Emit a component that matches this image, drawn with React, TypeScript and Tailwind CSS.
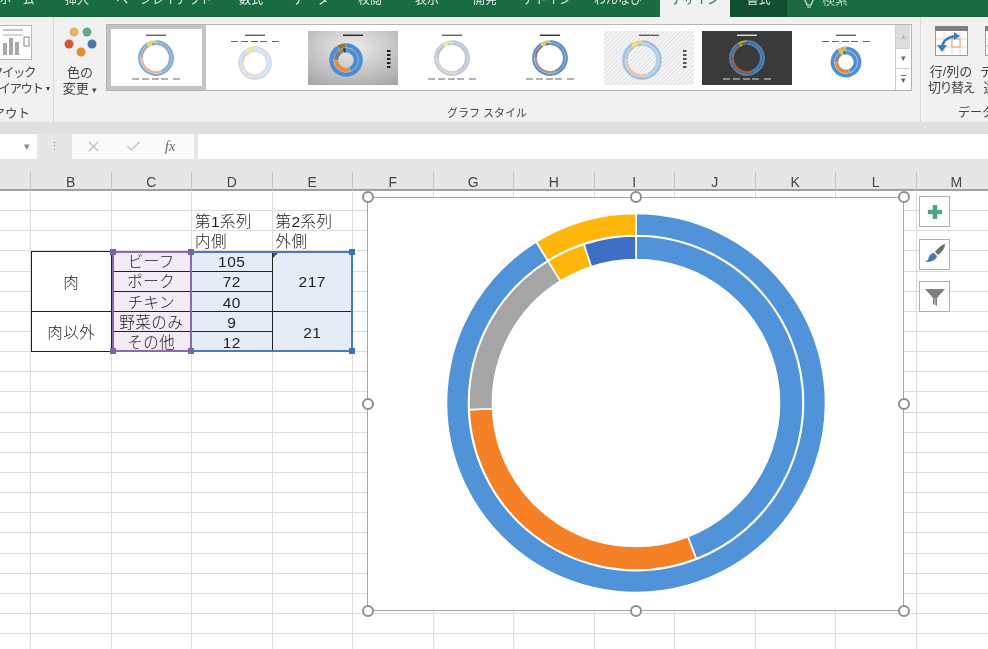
import { Check, X } from "lucide-react";

const FONT = "font-['Liberation_Sans','Noto_Sans_CJK_JP',sans-serif]";

const TABS = [
  { label: "ホーム", w: "w-[34px]" },
  { label: "挿入", w: "w-[86px]" },
  { label: "ページレイアウト", w: "w-[88px]" },
  { label: "数式", w: "w-[86px]" },
  { label: "データ", w: "w-[34px]" },
  { label: "校閲", w: "w-[84px]" },
  { label: "表示", w: "w-[30px]" },
  { label: "開発", w: "w-[86px]" },
  { label: "アドイン", w: "w-[38px]" },
  { label: "わんなび", w: "w-[94px] pl-[10px]" },
];

const COLS = ["", "B", "C", "D", "E", "F", "G", "H", "I", "J", "K", "L", "M"];

// text and look of the cells that hold data (row-column, 0 based)
const LINE = "border-b-[#222]";
const BOX = "border-l border-l-[#222] border-r-[#222]";
const CELLS: Record<string, { text: string; cls: string }> = {
  "1-3": { text: "第1系列", cls: "justify-start pl-[3px]" },
  "1-4": { text: "第2系列", cls: "justify-start pl-[3px]" },
  "2-3": { text: "内側", cls: "justify-start pl-[3px]" },
  "2-4": { text: "外側", cls: "justify-start pl-[3px]" },
  "3-1": { text: "肉", cls: `row-span-3 border-t border-t-[#222] ${BOX} ${LINE}` },
  "6-1": { text: "肉以外", cls: `row-span-2 ${BOX} ${LINE}` },
  "3-2": { text: "ビーフ", cls: `bg-[#f2ebf5] ${LINE}` },
  "4-2": { text: "ポーク", cls: `bg-[#f2ebf5] ${LINE}` },
  "5-2": { text: "チキン", cls: `bg-[#f2ebf5] ${LINE}` },
  "6-2": { text: "野菜のみ", cls: `bg-[#f2ebf5] ${LINE}` },
  "7-2": { text: "その他", cls: `bg-[#f2ebf5] ${LINE}` },
  "3-3": { text: "105", cls: `bg-[#e6ecf6] border-r-[#222] ${LINE}` },
  "4-3": { text: "72", cls: `bg-[#e6ecf6] border-r-[#222] ${LINE}` },
  "5-3": { text: "40", cls: `bg-[#e6ecf6] border-r-[#222] ${LINE}` },
  "6-3": { text: "9", cls: `bg-[#e6ecf6] border-r-[#222] ${LINE}` },
  "7-3": { text: "12", cls: `bg-[#e6ecf6] border-r-[#222] ${LINE}` },
  "3-4": { text: "217", cls: `row-span-3 bg-[#e6ecf6] ${LINE}` },
  "6-4": { text: "21", cls: `row-span-2 bg-[#e6ecf6] ${LINE}` },
};
const MERGED = new Set(["4-1", "5-1", "7-1", "4-4", "5-4", "7-4"]);

function polar(r: number, deg: number) {
  const a = ((deg - 90) * Math.PI) / 180;
  return [r * Math.cos(a), r * Math.sin(a)];
}

function slice(r0: number, r1: number, a0: number, a1: number) {
  const large = a1 - a0 > 180 ? 1 : 0;
  const [x0, y0] = polar(r1, a0);
  const [x1, y1] = polar(r1, a1);
  const [x2, y2] = polar(r0, a1);
  const [x3, y3] = polar(r0, a0);
  return `M${x0} ${y0}A${r1} ${r1} 0 ${large} 1 ${x1} ${y1}L${x2} ${y2}A${r0} ${r0} 0 ${large} 0 ${x3} ${y3}Z`;
}

function Ring({
  values,
  colors,
  r0,
  r1,
  gap = 1.6,
  gapColor = "#fff",
}: {
  values: number[];
  colors: string[];
  r0: number;
  r1: number;
  gap?: number;
  gapColor?: string;
}) {
  const total = values.reduce((a, b) => a + b, 0);
  let at = 0;
  return (
    <>
      {values.map((v, i) => {
        const from = at;
        at += (v / total) * 360;
        return <path key={i} d={slice(r0, r1, from, at)} fill={colors[i]} stroke={gapColor} strokeWidth={gap} />;
      })}
    </>
  );
}

function Donut() {
  return (
    <svg width="400" height="400" viewBox="-200 -200 400 400" className="-mt-[2px]">
      <Ring values={[217, 21]} colors={["#5193d8", "#ffb60b"]} r0={167.5} r1={189.5} />
      <Ring
        values={[105, 72, 40, 9, 12]}
        colors={["#5193d8", "#f58025", "#a5a5a5", "#ffb60b", "#3f6fc4"]}
        r0={143.5}
        r1={167}
      />
    </svg>
  );
}

type ThumbProps = {
  id: string;
  bg?: string;
  r?: number;
  w?: number;
  cx?: number;
  cy?: number;
  title?: string;
  outer?: string[];
  inner?: string[];
  legend?: "bottom" | "top" | "right";
  legendColor?: string;
};

// tiny preview of a chart style; the text in them is only dashes at this size
function Thumb({
  id,
  bg = "#fff",
  r = 18,
  w = 5,
  cx = 45,
  cy = 27,
  title = "#555",
  outer = ["#7aaad8", "#ecd050"],
  inner = ["#8fa8c4", "#e8b090", "#a8a8a8", "#ecd050", "#7b9bd0"],
  legend = "bottom",
  legendColor = "#666",
}: ThumbProps) {
  const lx = [21, 31, 41, 50, 62];
  const ly = legend === "top" ? 10 : 47.5;
  const fill = bg === "stripes" || bg === "grad" ? `url(#${id})` : bg;
  const gapColor = bg === "#3a3a3a" ? "#3a3a3a" : "#fff";
  return (
    <svg width="90" height="54" viewBox="0 0 90 54">
      <defs>
        {bg === "stripes" && (
          <pattern id={id} width="3" height="3" patternUnits="userSpaceOnUse" patternTransform="rotate(45)">
            <rect width="3" height="3" fill="#f6f6f6" />
            <rect width="1" height="3" fill="#dedede" />
          </pattern>
        )}
        {bg === "grad" && (
          <radialGradient id={id} cx="50%" cy="30%" r="80%">
            <stop offset="0%" stopColor="#ececec" />
            <stop offset="100%" stopColor="#a8a8a8" />
          </radialGradient>
        )}
      </defs>
      <rect width="90" height="54" fill={fill} />
      <rect x="35" y="3.6" width="20" height="1.3" fill={title} />
      {legend === "right"
        ? [19, 23, 27, 31, 35].map((y) => <rect key={y} x="79" y={y} width="3.5" height="2" fill={legendColor} />)
        : lx.map((x) => <rect key={x} x={x} y={ly} width="7" height="1" fill={legendColor} />)}
      <g transform={`translate(${cx} ${cy})`}>
        <Ring values={[217, 21]} colors={outer} r0={r - w / 2} r1={r} gap={0.2} gapColor={gapColor} />
        <Ring values={[105, 72, 40, 9, 12]} colors={inner} r0={r - w} r1={r - w / 2} gap={0.2} gapColor={gapColor} />
      </g>
    </svg>
  );
}

function QuickLayoutIcon() {
  return (
    <svg width="33" height="35" viewBox="0 0 33 35" className="-ml-[1px]">
      <rect x="0.5" y="0.5" width="32" height="34" fill="#fff" stroke="#b8b8b8" />
      <rect x="4" y="4" width="20" height="2" fill="#c4c4c4" />
      <rect x="4" y="9" width="20" height="2" fill="#d4d4d4" />
      <rect x="4" y="18" width="4" height="12" fill="#a8a8a8" />
      <rect x="10" y="13" width="4" height="17" fill="#a8a8a8" />
      <rect x="16" y="17" width="4" height="13" fill="#a8a8a8" />
      <rect x="25" y="12" width="5" height="9" fill="#fff" stroke="#888" />
    </svg>
  );
}

function ColorDots() {
  return (
    <svg width="36" height="32" viewBox="0 0 36 32">
      <circle cx="12" cy="6" r="4.5" fill="#e4b464" />
      <circle cx="25" cy="6" r="4.5" fill="#68a68e" />
      <circle cx="7" cy="18" r="4.5" fill="#d2573a" />
      <circle cx="30" cy="18" r="4.5" fill="#4a78ad" />
      <circle cx="19" cy="26" r="4.5" fill="#e58a35" />
    </svg>
  );
}

function SwitchIcon({ className = "" }: { className?: string }) {
  return (
    <svg width="33" height="30" viewBox="0 0 33 30" className={className}>
      <rect x="0.5" y="0.5" width="32" height="29" fill="#fff" stroke="#9a9a9a" />
      <rect x="0" y="0" width="33" height="5" fill="#7f7f7f" />
      <path d="M1 13H32M1 21H32M9 6V29M17 6V29M25 6V29" stroke="#d8d8d8" />
      <rect x="17" y="13" width="8" height="8" fill="#fff" stroke="#e0a060" />
      <path d="M7 21C8 14 14 11 21 10" stroke="#3f7fb5" strokeWidth="2.4" fill="none" />
      <path d="M19 6L25 10L19 14Z" fill="#3f7fb5" />
      <path d="M2 19L7 26L12 19Z" fill="#3f7fb5" />
    </svg>
  );
}

function Handle({ className }: { className: string }) {
  return <span className={`absolute size-[12px] rounded-full border-2 border-[#8f8f8f] bg-white ${className}`} />;
}

function Corner({ className }: { className: string }) {
  return <span className={`absolute size-[6px] ${className}`} />;
}

function SideButton({ children }: { children: React.ReactNode }) {
  return (
    <div className="flex size-[31px] items-center justify-center border-[1.5px] border-[#b0b0b0] bg-white">
      {children}
    </div>
  );
}

export default function App() {
  return (
    <div className={`relative flex h-[649px] w-[988px] flex-col overflow-hidden bg-white text-[#333] blur-[0.35px] ${FONT}`}>
      {/* Tabs, cut off by the top of the window */}
      <div className="flex h-[17px] shrink-0 overflow-hidden bg-[#1b6b40] text-[12px] leading-[20px] text-[#dfeee6]">
        <div className="-mt-[10px] flex items-start">
          {TABS.map((t) => (
            <span key={t.label} className={`${t.w} flex shrink-0 justify-center whitespace-nowrap`}>
              {t.label}
            </span>
          ))}
          <span className="h-[30px] w-[70px] shrink-0 bg-[#f1f1f1] text-center text-[#1b6b40]">デザイン</span>
          <span className="h-[30px] w-[57px] shrink-0 bg-[#114f2d] text-center">書式</span>
          <span className="ml-[17px] flex items-center gap-[8px] text-[13px] text-[#a9cdb9]">
            <svg width="10" height="14" viewBox="0 0 10 14" className="mt-[5px]">
              <path d="M1 4a4 4 0 018 0c0 2-2 3-2 5H3c0-2-2-3-2-5zM3 11h4" stroke="#dfeee6" strokeWidth="1.2" fill="none" />
            </svg>
            検索
          </span>
        </div>
      </div>

      {/* Ribbon */}
      <div className="flex h-[105px] shrink-0 bg-[#f1f1f1] text-[13px] leading-[16px] text-[#444]">
        <div className="flex w-[54px] shrink-0 flex-col overflow-hidden border-r border-[#d8d8d8] text-[12.5px]">
          <div className="pt-[8px]">
            <QuickLayoutIcon />
          </div>
          <div className="mt-[5px] whitespace-nowrap tracking-[-1.5px]">
            <div className="flex w-[35px] justify-end">クイック</div>
            <div className="flex w-[48px] justify-end">
              レイアウト<span className="ml-[3px] text-[8px]">▾</span>
            </div>
          </div>
          <div className="mt-auto flex w-[30px] justify-end whitespace-nowrap">レイアウト</div>
        </div>

        <div className="flex w-[867px] shrink-0 flex-col border-r border-[#d8d8d8]">
          <div className="flex items-start">
            <div className="flex w-[52px] shrink-0 flex-col items-center pt-[9px]">
              <ColorDots />
              <div className="mt-[7px] text-center">
                色の
                <br />
                変更 <span className="text-[9px]">▾</span>
              </div>
            </div>
            <div className="mt-[7px] flex h-[67px] w-[806px] border border-[#b3b3b3] bg-white blur-[0.3px]">
              <div className="flex h-[65px] w-[98.5px] items-center justify-center border-[4px] border-[#c4c4c4] bg-white">
                <Thumb id="t1" />
              </div>
              <div className="flex w-[98.5px] items-center justify-center">
                <Thumb
                  id="t2"
                  legend="top"
                  cy={32}
                  r={17}
                  w={6}
                  outer={["#cfdff0", "#ece29a"]}
                  inner={["#d8dfe8", "#eadcd0", "#d4d4da", "#ece29a", "#cfdff0"]}
                />
              </div>
              <div className="flex w-[98.5px] items-center justify-center">
                <Thumb
                  id="t3"
                  bg="grad"
                  r={17}
                  w={9.5}
                  cx={38}
                  cy={29}
                  title="#111"
                  legend="right"
                  legendColor="#222"
                  outer={["#4d8dce", "#8a7a3a"]}
                  inner={["#4d8dce", "#e58a4a", "#6f7f8f", "#8a7a3a", "#444"]}
                />
              </div>
              <div className="flex w-[98.5px] items-center justify-center">
                <Thumb
                  id="t4"
                  outer={["#bccbdb", "#e9dc90"]}
                  inner={["#bcc4d0", "#ddd0c8", "#bdbfc6", "#e9dc90", "#bccbdb"]}
                />
              </div>
              <div className="flex w-[98.5px] items-center justify-center">
                <Thumb
                  id="t5"
                  title="#222"
                  outer={["#5b8cc4", "#dcc24a"]}
                  inner={["#5b8cc4", "#a8907e", "#7d7d7d", "#dcc24a", "#4f78b0"]}
                />
              </div>
              <div className="flex w-[98.5px] items-center justify-center">
                <Thumb
                  id="t6"
                  bg="stripes"
                  r={20}
                  w={6}
                  cx={38}
                  cy={29}
                  legend="right"
                  legendColor="#555"
                  outer={["#9dc0e4", "#ecd65a"]}
                  inner={["#b4cbe6", "#e6c4a6", "#bcc8d8", "#ecd65a", "#9dc0e4"]}
                />
              </div>
              <div className="flex w-[98.5px] items-center justify-center">
                <Thumb
                  id="t7"
                  bg="#3a3a3a"
                  title="#eee"
                  legendColor="#ddd"
                  outer={["#4f82bd", "#c9a93a"]}
                  inner={["#4f82bd", "#a9603a", "#6e7680", "#c9a93a", "#3f6aa0"]}
                />
              </div>
              <div className="flex w-[98.5px] items-center justify-center">
                <Thumb
                  id="t8"
                  legend="top"
                  r={15.5}
                  w={8}
                  cy={31}
                  outer={["#4f8fd0", "#e0b92e"]}
                  inner={["#4f8fd0", "#d98a4a", "#8a8a8a", "#e0b92e", "#3f6fc4"]}
                />
              </div>
              <div className="flex w-[15px] shrink-0 flex-col border-l border-[#d0d0d0] text-[9px] leading-none text-[#666]">
                <div className="flex h-[23px] items-center justify-center bg-[#dcdcdc] text-[#bbb]">▴</div>
                <div className="flex h-[21px] items-center justify-center border-y border-[#d0d0d0]">▾</div>
                <div className="flex h-[21px] items-center justify-center">
                  <span className="border-t border-[#666]">▾</span>
                </div>
              </div>
            </div>
          </div>
          <div className="mt-auto pb-[1px] text-center text-[11px]">グラフ スタイル</div>
        </div>

        <div className="flex min-w-0 flex-1 flex-col overflow-hidden pl-[7px]">
          <div className="flex items-start gap-[6px] whitespace-nowrap">
            <div className="flex w-[46px] shrink-0 flex-col items-center pt-[9px]">
              <SwitchIcon />
              <div className="mt-[8px] text-center">
                行/列の
                <br />
                <span className="tracking-[-1.5px]">切り替え</span>
              </div>
            </div>
            <div className="flex w-[46px] shrink-0 flex-col items-start pt-[9px]">
              <SwitchIcon className="ml-[5px]" />
              <div className="mt-[8px]">
                デー
                <br />
                &nbsp;選
              </div>
            </div>
          </div>
          <div className="mt-auto whitespace-nowrap pb-[1px] pl-[30px] text-[12px]">データ</div>
        </div>
      </div>

      <div className="h-[12px] shrink-0 bg-[#e0e0e0]" />

      {/* Formula bar */}
      <div className="flex h-[26px] shrink-0 gap-[4px] bg-[#e6e6e6] pb-[1px] text-[#8a8a8a]">
        <div className="flex w-[37px] items-center justify-end bg-white pr-[7px] text-[11px]">▾</div>
        <div className="flex w-[27px] items-center justify-center text-[11px] leading-none">⋮</div>
        <div className="flex w-[122px] items-center bg-[#fafafa]">
          <X size={17} className="ml-[13px] text-[#c4c4c4]" />
          <Check size={17} className="ml-[23px] text-[#c4c4c4]" />
          <span className="ml-[23px] font-['Liberation_Serif',serif] text-[14px] italic text-[#666]">fx</span>
        </div>
        <div className="flex-1 bg-white" />
      </div>

      {/* Column headers */}
      <div className="grid h-[31px] shrink-0 grid-cols-[31px_repeat(12,80.5px)] border-b-2 border-[#a0a0a0] bg-[#e6e6e6] pt-[12px] text-[14px] leading-[20px] text-[#444]">
        {COLS.map((c, i) => (
          <div key={i} className="border-r border-[#c4c4c4] text-center">
            {c}
          </div>
        ))}
      </div>

      {/* Sheet */}
      <div className="relative flex-1 overflow-hidden">
        <div className="relative grid grid-cols-[31px_repeat(12,80.5px)] auto-rows-[20.15px] text-[15.5px] font-light leading-none tracking-[0.5px] text-[#222]">
          {Array.from({ length: 23 }).flatMap((_, r) =>
            COLS.map((_, c) => {
              const key = `${r}-${c}`;
              if (MERGED.has(key)) return null;
              const cell = CELLS[key];
              return (
                <div
                  key={key}
                  className={`relative flex items-center justify-center whitespace-nowrap border-b border-r border-[#dcdcdc] pt-[2px] ${cell?.cls ?? ""}`}
                >
                  {key === "3-4" && (
                    <span className="absolute left-0 top-0 border-r-[7px] border-t-[7px] border-r-transparent border-t-[#1f6f3a]" />
                  )}
                  {cell?.text}
                </div>
              );
            }),
          )}

          {/* Range highlights of the selected chart */}
          <div className="absolute inset-0 col-start-3 col-end-4 row-start-4 row-end-9 border-2 border-[#8a6aa8]">
            <Corner className="-left-[4px] -top-[4px] bg-[#7d64a0]" />
            <Corner className="-left-[4px] -bottom-[4px] bg-[#7d64a0]" />
            <Corner className="-right-[4px] -top-[4px] bg-[#7d64a0]" />
            <Corner className="-right-[4px] -bottom-[4px] bg-[#7d64a0]" />
          </div>
          <div className="absolute inset-0 col-start-4 col-end-6 row-start-4 row-end-9 border-2 border-l-0 border-[#4a7cbd]">
            <Corner className="-right-[4px] -top-[4px] bg-[#3f6fb5]" />
            <Corner className="-right-[4px] -bottom-[4px] bg-[#3f6fb5]" />
          </div>
        </div>

        {/* Chart floats over the sheet */}
        <div className="absolute left-[367px] top-[6px] flex h-[414px] w-[537px] items-center justify-center border-[1.5px] border-[#a6a6a6] bg-[#fefefe]">
          <Donut />
          <Handle className="-left-[6.5px] -top-[7px]" />
          <Handle className="left-[262px] -top-[7px]" />
          <Handle className="-right-[6.5px] -top-[7px]" />
          <Handle className="-left-[6.5px] top-[199.5px]" />
          <Handle className="-right-[6.5px] top-[199.5px]" />
          <Handle className="-left-[6.5px] -bottom-[7px]" />
          <Handle className="left-[262px] -bottom-[7px]" />
          <Handle className="-right-[6.5px] -bottom-[7px]" />
        </div>

        {/* Chart side buttons */}
        <div className="absolute left-[919px] top-[5px] flex flex-col gap-[11.5px]">
          <SideButton>
            <svg width="16" height="16" viewBox="0 0 18 18">
              <path d="M6.5 1h5v5.5H17v5h-5.5V17h-5v-5.5H1v-5h5.5z" fill="#4ea585" />
            </svg>
          </SideButton>
          <SideButton>
            <svg width="22" height="22" viewBox="0 0 22 22">
              <path d="M21 1c0 4-3 8-7 11l-3-3c3-4 6-7 10-8z" fill="#6f6f6f" />
              <path d="M10 10l3 3c-1 4-5 6-12 6 3-1 3-3 4-5 1-3 3-4 5-4z" fill="#4a76bd" />
            </svg>
          </SideButton>
          <SideButton>
            <svg width="22" height="22" viewBox="0 0 22 22">
              <path d="M1 3h20l-8 9v8l-4-2v-6z" fill="#7f7f7f" />
              <path d="M11 12v7" stroke="#cfcfcf" strokeWidth="1" />
            </svg>
          </SideButton>
        </div>
      </div>
    </div>
  );
}
